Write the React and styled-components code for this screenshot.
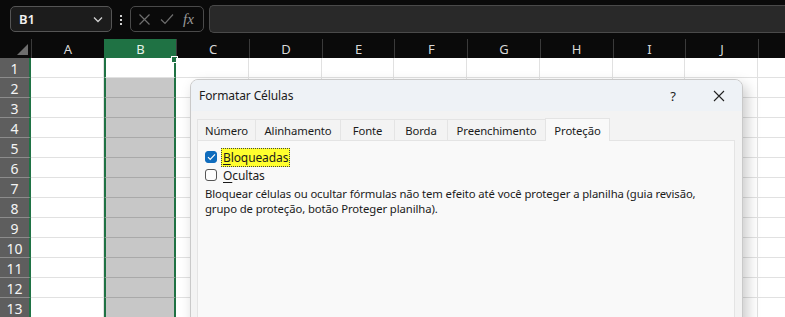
import React from 'react';
import styled, { createGlobalStyle } from 'styled-components';

const GlobalStyle = createGlobalStyle`
  html, body {
    margin: 0;
    padding: 0;
    width: 785px;
    height: 317px;
    overflow: hidden;
    background: #ffffff;
    font-family: "Noto Sans", "Open Sans", Arial, sans-serif;
  }
`;

const COLS = ['A', 'B', 'C', 'D', 'E', 'F', 'G', 'H', 'I', 'J', ''];
const ROWS = [1, 2, 3, 4, 5, 6, 7, 8, 9, 10, 11, 12, 13];
const TABS = ['Número', 'Alinhamento', 'Fonte', 'Borda', 'Preenchimento', 'Proteção'];
const TAB_W = [58, 85, 54, 53, 98, 65];

const Screen = styled.div`
  position: relative;
  width: 785px;
  height: 317px;
  overflow: hidden;
  background: #0a0a0a;
`;

const TopBar = styled.div`
  display: flex;
  align-items: flex-start;
  height: 38px;
  padding: 5px 0 0 10px;
  box-sizing: border-box;
  background: #0a0a0a;
`;

const NameBox = styled.div`
  display: flex;
  align-items: center;
  justify-content: space-between;
  width: 102px;
  height: 26px;
  box-sizing: border-box;
  margin-top: 1px;
  padding: 0 7px 0 8px;
  border: 1px solid #555;
  border-radius: 5px;
  background: #1c1c1c;
  color: #f2f2f2;
  font-size: 13px;
  font-weight: 600;
`;

const Dots = styled.div`
  display: flex;
  flex-direction: column;
  gap: 2px;
  width: 3px;
  margin: 10px 7px 0 8px;
  span {
    width: 2px;
    height: 2px;
    background: #d0d0d0;
  }
`;

const FxBox = styled.div`
  display: flex;
  align-items: center;
  gap: 9px;
  width: 74px;
  height: 26px;
  box-sizing: border-box;
  margin-top: 1px;
  padding: 0 5px 0 7px;
  border: 1px solid #4a4a4a;
  border-radius: 5px;
`;

const Fx = styled.span`
  font-family: "Liberation Serif", "DejaVu Serif", serif;
  font-style: italic;
  font-size: 15px;
  color: #9a9a9a;
`;

const FormulaInput = styled.div`
  flex: 1;
  height: 26px;
  margin-left: 5px;
  border: 1px solid #4a4a4a;
  border-right: none;
  border-radius: 5px 0 0 5px;
  background: #292929;
`;

const Sheet = styled.div`
  display: grid;
  grid-template-columns: 31px repeat(11, 72.7px);
  grid-template-rows: 20px repeat(13, 20px);
`;

const Corner = styled.div`
  position: relative;
  background: #0a0a0a;
  &::after {
    content: '';
    position: absolute;
    right: 3px;
    bottom: 3px;
    border-left: 11px solid transparent;
    border-bottom: 11px solid #6e6e6e;
  }
`;

const ColHead = styled.div`
  display: flex;
  align-items: center;
  justify-content: center;
  box-sizing: border-box;
  margin-top: 1px;
  background: ${p => (p.$active ? '#1f7244' : '#0a0a0a')};
  border-left: 1px solid ${p => (p.$active ? '#1f7244' : '#3a3a3a')};
  color: ${p => (p.$active ? '#e6f2ea' : '#d8d8d8')};
  font-size: 13px;
`;

const RowHead = styled.div`
  display: flex;
  align-items: center;
  justify-content: center;
  box-sizing: border-box;
  background: #5e5e5e;
  border-bottom: 1px solid #8c8c8c;
  border-right: 2px solid #1f7244;
  color: #f4f4f4;
  font-size: 14px;
  padding-top: 2px;
`;

const Cell = styled.div`
  position: relative;
  box-sizing: border-box;
  background: ${p => (p.$shaded ? '#c7c7c7' : '#ffffff')};
  border-bottom: 1px solid ${p => (p.$shaded ? '#a9a9a9' : '#e1e1e1')};
  border-right: 1px solid #e1e1e1;
  ${p => p.$selected && `
    border-left: 2px solid #1f7244;
    border-right: 2px solid #1f7244;
  `}
`;

const Handle = styled.span`
  position: absolute;
  top: -2px;
  right: -4px;
  width: 5px;
  height: 5px;
  background: #1f7244;
  border: 1px solid #fff;
`;

const Dialog = styled.div`
  position: absolute;
  left: 190px;
  top: 79px;
  width: 553px;
  height: 260px;
  box-sizing: border-box;
  display: flex;
  flex-direction: column;
  border: 1px solid #c9c9c9;
  border-radius: 8px 8px 0 0;
  background: #f3f3f3;
  box-shadow: 4px 6px 14px rgba(0, 0, 0, 0.22);
  overflow: hidden;
  color: #1b1b1b;
  font-size: 11.3px;
  letter-spacing: -0.1px;
`;

const TitleBar = styled.div`
  display: flex;
  align-items: center;
  height: 31px;
  padding: 0 0 0 8px;
  background: #eef2f6;
  font-size: 12px;
`;

const Title = styled.span`
  flex: 1;
`;

const TitleButton = styled.span`
  display: flex;
  align-items: center;
  justify-content: center;
  width: 46px;
  height: 31px;
  font-size: 13px;
`;

const Body = styled.div`
  flex: 1;
  display: flex;
  flex-direction: column;
  padding: 6px 7px 0 6px;
`;

const TabRow = styled.div`
  display: flex;
  align-items: flex-end;
  height: 23px;
`;

const Tab = styled.div`
  position: relative;
  z-index: ${p => (p.$active ? 1 : 0)};
  display: flex;
  align-items: center;
  justify-content: center;
  box-sizing: border-box;
  width: ${p => p.$w}px;
  height: ${p => (p.$active ? 23 : 21)}px;
  margin-bottom: ${p => (p.$active ? -1 : 0)}px;
  background: ${p => (p.$active ? '#f9f9f9' : '#f3f3f3')};
  border-top: 1px solid #e4e4e4;
  border-left: 1px solid #e4e4e4;
  ${p => p.$active && 'border-right: 1px solid #e4e4e4;'}
`;

const Panel = styled.div`
  flex: 1;
  padding: 7px 0 0 7px;
  background: #f9f9f9;
  border: 1px solid #e4e4e4;
`;

const CheckRow = styled.div`
  display: flex;
  align-items: center;
  gap: 4px;
  height: 18px;
`;

const Box = styled.span`
  display: flex;
  align-items: center;
  justify-content: center;
  width: 12px;
  height: 12px;
  box-sizing: border-box;
  border-radius: 3px;
  background: ${p => (p.$checked ? '#0f6cbd' : '#fdfdfd')};
  border: 1px solid ${p => (p.$checked ? '#0f6cbd' : '#555')};
`;

const Label = styled.span`
  padding: 1px 2px;
  font-size: 12px;
  ${p => p.$focus && `
    background: #ffff2e;
    outline: 1px dotted #444;
    outline-offset: -1px;
  `}
  u {
    text-decoration: underline;
    text-underline-offset: 2px;
  }
`;

const Note = styled.p`
  margin: 2px 0 0 0;
  line-height: 15px;
`;

const App = () => (
  <Screen>
    <GlobalStyle />
    <TopBar>
      <NameBox>
        B1
        <svg width="12" height="12" viewBox="0 0 12 12">
          <path d="M2 4.5l4 4 4-4" fill="none" stroke="#d0d0d0" strokeWidth="1.3" />
        </svg>
      </NameBox>
      <Dots><span /><span /><span /></Dots>
      <FxBox>
        <svg width="13" height="13" viewBox="0 0 13 13">
          <path d="M1.5 1.5l10 10M11.5 1.5l-10 10" stroke="#6e6e6e" strokeWidth="1.2" />
        </svg>
        <svg width="14" height="12" viewBox="0 0 14 12">
          <path d="M1 6.5l4 4 8-9" fill="none" stroke="#6e6e6e" strokeWidth="1.2" />
        </svg>
        <Fx>fx</Fx>
      </FxBox>
      <FormulaInput />
    </TopBar>

    <Sheet>
      <Corner />
      {COLS.map((c, i) => (
        <ColHead key={i} $active={c === 'B'}>{c}</ColHead>
      ))}
      {ROWS.map(r => (
        <React.Fragment key={r}>
          <RowHead>{r}</RowHead>
          {COLS.map((c, i) => (
            <Cell key={i} $selected={c === 'B'} $shaded={c === 'B' && r > 1}>
              {c === 'B' && r === 1 && <Handle />}
            </Cell>
          ))}
        </React.Fragment>
      ))}
    </Sheet>

    <Dialog>
      <TitleBar>
        <Title>Formatar Células</Title>
        <TitleButton>?</TitleButton>
        <TitleButton>
          <svg width="12" height="12" viewBox="0 0 12 12">
            <path d="M1 1l10 10M11 1L1 11" stroke="#222" strokeWidth="1.1" />
          </svg>
        </TitleButton>
      </TitleBar>
      <Body>
        <TabRow>
          {TABS.map((t, i) => (
            <Tab key={t} $w={TAB_W[i]} $active={t === 'Proteção'}>{t}</Tab>
          ))}
        </TabRow>
        <Panel>
          <CheckRow>
            <Box $checked>
              <svg width="9" height="8" viewBox="0 0 9 8">
                <path d="M1 4.2l2.2 2.2L8 1.4" fill="none" stroke="#fff" strokeWidth="1.2" />
              </svg>
            </Box>
            <Label $focus><u>B</u>loqueadas</Label>
          </CheckRow>
          <CheckRow>
            <Box />
            <Label><u>O</u>cultas</Label>
          </CheckRow>
          <Note>
            Bloquear células ou ocultar fórmulas não tem efeito até você proteger a planilha (guia revisão,
            <br />
            grupo de proteção, botão Proteger planilha).
          </Note>
        </Panel>
      </Body>
    </Dialog>
  </Screen>
);

export default App;
